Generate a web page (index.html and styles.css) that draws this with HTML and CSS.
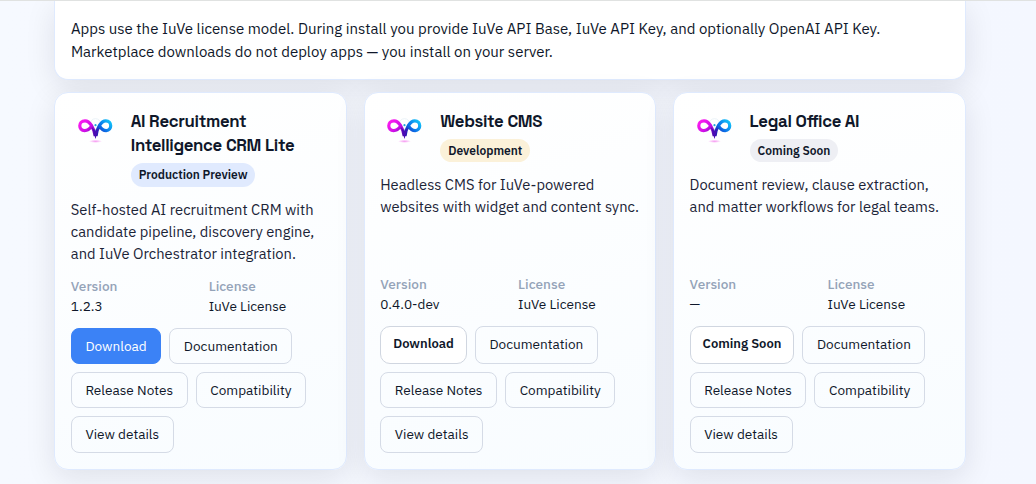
FILE: index.html
```html
<!DOCTYPE html>
<html lang="en">
<head>
<meta charset="utf-8">
<title>IuVe Marketplace</title>
<link rel="stylesheet" href="styles.css">
</head>

<body>
<!-- logo shared by all the cards -->
<svg class="defs" width="0" height="0">
	<defs>
		<linearGradient id="pink" x1="0" y1="0" x2="1" y2="1">
			<stop offset="0" stop-color="#ff1cf0" />
			<stop offset="0.5" stop-color="#d010e8" />
			<stop offset="1" stop-color="#3c08a0" />
		</linearGradient>
		<linearGradient id="blue" x1="1" y1="0" x2="0" y2="1">
			<stop offset="0" stop-color="#12c8fa" />
			<stop offset="0.5" stop-color="#0a70e8" />
			<stop offset="1" stop-color="#2808a0" />
		</linearGradient>
		<radialGradient id="glow">
			<stop offset="0" stop-color="#f58cf0" stop-opacity="0.9" />
			<stop offset="1" stop-color="#f58cf0" stop-opacity="0" />
		</radialGradient>
		<symbol id="logo" viewBox="0 0 48 48">
			<ellipse cx="24.5" cy="33.3" rx="6.5" ry="1.6" fill="url(#glow)" />
			<circle cx="24.5" cy="16" r="5.3" fill="none" stroke="#dceaf2" stroke-width="0.6" />
			<path d="M24.2 28 C22.8 20 19 12.8 14 12.8 C7 12.8 7.2 22.6 13.6 22.6 C17 22.6 18.8 20.8 20.4 18.4" fill="none" stroke="url(#pink)" stroke-width="3.2" />
			<path d="M25 28 C26 20 30 12.8 34.8 12.8 C41.4 12.8 41.2 22.6 35.2 22.6 C32 22.6 30.2 20.8 28.8 18.4" fill="none" stroke="url(#blue)" stroke-width="3.2" />
			<path d="M20.8 19 L24.5 31 L28 19.5 L24.7 23.5 Z" fill="#4a0cb4" />
			<circle cx="24.5" cy="17.2" r="1.1" fill="#20a8d8" />
		</symbol>
	</defs>
</svg>

<main class="page">
	<section class="panel intro">
		<p>Apps use the IuVe license model. During install you provide IuVe API Base, IuVe API Key, and optionally OpenAI API Key.<br>
		Marketplace downloads do not deploy apps — you install on your server.</p>
	</section>

	<section class="grid">
		<article class="panel card">
			<header class="head">
				<svg class="logo"><use href="#logo" /></svg>
				<div>
					<h3>AI Recruitment<br>Intelligence CRM Lite</h3>
					<span class="badge preview">Production Preview</span>
				</div>
			</header>
			<p class="desc">Self-hosted AI recruitment CRM with<br>candidate pipeline, discovery engine,<br>and IuVe Orchestrator integration.</p>
			<dl class="meta">
				<div><dt>Version</dt><dd>1.2.3</dd></div>
				<div><dt>License</dt><dd>IuVe License</dd></div>
			</dl>
			<div class="actions">
				<a class="btn primary">Download</a>
				<a class="btn">Documentation</a>
				<a class="btn">Release Notes</a>
				<a class="btn">Compatibility</a>
				<a class="btn">View details</a>
			</div>
		</article>

		<article class="panel card">
			<header class="head">
				<svg class="logo"><use href="#logo" /></svg>
				<div>
					<h3>Website CMS</h3>
					<span class="badge dev">Development</span>
				</div>
			</header>
			<p class="desc">Headless CMS for IuVe-powered<br>websites with widget and content sync.</p>
			<dl class="meta">
				<div><dt>Version</dt><dd>0.4.0-dev</dd></div>
				<div><dt>License</dt><dd>IuVe License</dd></div>
			</dl>
			<div class="actions">
				<button class="get">Download</button>
				<a class="btn">Documentation</a>
				<a class="btn">Release Notes</a>
				<a class="btn">Compatibility</a>
				<a class="btn">View details</a>
			</div>
		</article>

		<article class="panel card">
			<header class="head">
				<svg class="logo"><use href="#logo" /></svg>
				<div>
					<h3>Legal Office AI</h3>
					<span class="badge soon">Coming Soon</span>
				</div>
			</header>
			<p class="desc">Document review, clause extraction,<br>and matter workflows for legal teams.</p>
			<dl class="meta">
				<div><dt>Version</dt><dd>—</dd></div>
				<div><dt>License</dt><dd>IuVe License</dd></div>
			</dl>
			<div class="actions">
				<button class="get">Coming Soon</button>
				<a class="btn">Documentation</a>
				<a class="btn">Release Notes</a>
				<a class="btn">Compatibility</a>
				<a class="btn">View details</a>
			</div>
		</article>
	</section>
</main>
</body>
</html>
```
FILE: styles.css
```css
* { box-sizing: border-box; }
body { margin: 0; height: 484px; overflow: hidden; border-top: 1px solid #e0e2e1; background: linear-gradient(90deg, #f6f9ff, #f4f7ff); color: #0f172a; font-family: "IBM Plex Sans", Roboto, sans-serif; font-size: 15px; }
h3, p, dl, dd { margin: 0; }
.defs { position: absolute; }
.page { width: 911.2px; margin-left: 54.4px; }

.panel { border: 1px solid #dfeafe; border-radius: 14px; box-shadow: 0 8px 30px rgba(15, 23, 42, 0.1); }
.intro { height: 78.8px; padding: 16px 15.5px; border-top: none; border-radius: 0 0 14px 14px; background: #fff; line-height: 23px; white-space: nowrap; }

.grid { display: grid; grid-template-columns: repeat(3, minmax(0, 1fr)); gap: 17px; margin-top: 12.4px; }
.card { display: flex; flex-direction: column; gap: 11.2px; height: 377.4px; padding: 15.6px 15.4px 15.8px; background: linear-gradient(165deg, #fff, #f8fcff); white-space: nowrap; }

.head { display: flex; gap: 12px; }
.logo { width: 48px; height: 48px; flex: none; margin-top: -0.8px; }
h3 { font-family: "Space Grotesk", "Liberation Sans", sans-serif; font-size: 16.8px; line-height: 24.36px; font-weight: 700; letter-spacing: -0.02em; }
.badge { display: block; width: fit-content; height: 23.6px; margin-top: 5.6px; padding: 0 8px; border-radius: 12px; font-size: 12px; line-height: 23.6px; font-weight: 600; }
.preview { background: #e0eafe; }
.dev { background: #fbf1d9; }
.soon { background: #eeeff4; }

.desc { flex: 1; padding-top: 0.8px; margin-bottom: -0.7px; color: #1b2437; font-size: 14.72px; line-height: 22.08px; }

.meta { display: grid; grid-template-columns: 1fr 1fr; gap: 16.2px; font-size: 13.6px; line-height: 20.4px; }
dt { color: #94a3b8; font-weight: 500; }

.actions { display: flex; flex-wrap: wrap; gap: 8px; }
.btn { padding: 7px 13.6px; border: 1px solid #d5dbe6; border-radius: 8px; font-size: 13.6px; line-height: 20.4px; }
.btn.primary { background: #3b82f6; border-color: #3b82f6; color: #fff; }
.get { height: 38px; padding: 0 12px 1px; border: 1px solid #d0d6e0; border-radius: 10px; background: #fff; color: #0f172a; font: 600 13px/20px "IBM Plex Sans", Roboto, sans-serif; }
```
